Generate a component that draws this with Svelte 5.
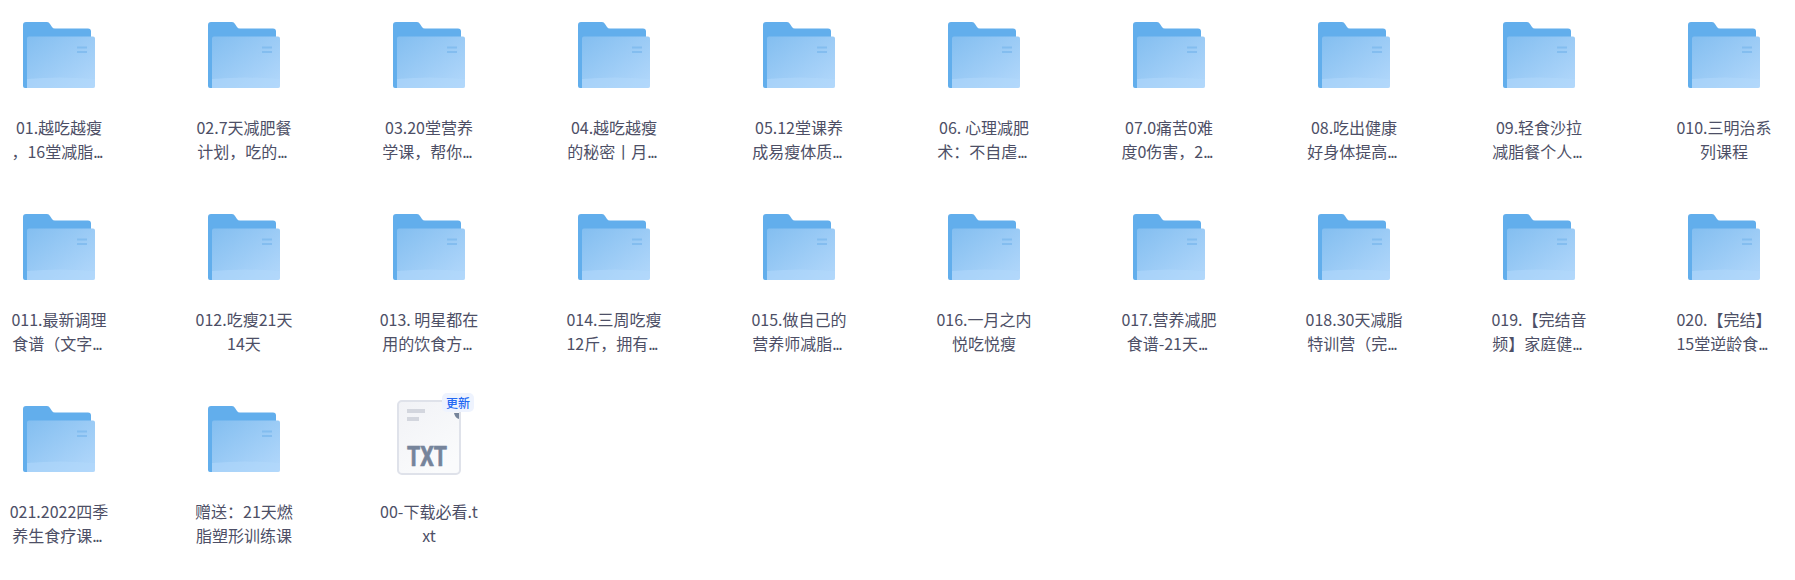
<script>
  const files = [
    ["01.越吃越瘦", "，16堂减脂..."],
    ["02.7天减肥餐", "计划，吃的..."],
    ["03.20堂营养", "学课，帮你..."],
    ["04.越吃越瘦", "的秘密丨月..."],
    ["05.12堂课养", "成易瘦体质..."],
    ["06. 心理减肥", "术：不自虐..."],
    ["07.0痛苦0难", "度0伤害，2..."],
    ["08.吃出健康", "好身体提高..."],
    ["09.轻食沙拉", "减脂餐个人..."],
    ["010.三明治系", "列课程"],
    ["011.最新调理", "食谱（文字..."],
    ["012.吃瘦21天", "14天"],
    ["013. 明星都在", "用的饮食方..."],
    ["014.三周吃瘦", "12斤，拥有..."],
    ["015.做自己的", "营养师减脂..."],
    ["016.一月之内", "悦吃悦瘦"],
    ["017.营养减肥", "食谱-21天..."],
    ["018.30天减脂", "特训营（完..."],
    ["019.【完结音", "频】家庭健..."],
    ["020.【完结】", "15堂逆龄食..."],
    ["021.2022四季", "养生食疗课..."],
    ["赠送：21天燃", "脂塑形训练课"],
    ["00-下载必看.t", "xt", "txt"]
  ];
</script>

<main class="grid">
  {#each files as f, i}
    <div class="item">
      <div class="thumb">
        {#if f[2] === "txt"}
          <svg class="txt-icon" width="66" height="78" viewBox="0 0 66 78">
            <defs>
              <linearGradient id="paper" x1="0" y1="0" x2="0.6" y2="1">
                <stop offset="0" stop-color="#f1f2f6" />
                <stop offset="1" stop-color="#fafbfc" />
              </linearGradient>
            </defs>
            <path d="M6 2H55L64 11V71a4 4 0 0 1-4 4H6a4 4 0 0 1-4-4V6a4 4 0 0 1 4-4Z" fill="url(#paper)" stroke="#dfe2ea" stroke-width="2" />
            <rect x="11" y="10" width="18" height="4" fill="#d3d6de" />
            <rect x="11" y="18" width="12" height="4" fill="#d3d6de" />
            <path d="M58 14h5v6Q59 19 58 14Z" fill="#76849b" />
            <text x="11" y="67" textLength="40" lengthAdjust="spacingAndGlyphs" class="txt-label">TXT</text>
          </svg>
          <span class="badge">更新</span>
        {:else}
          <svg width="72" height="67" viewBox="0 0 72 67">
            <defs>
              <linearGradient id="front{i}" x1="0" y1="0" x2="1" y2="1">
                <stop offset="0" stop-color="#83bef0" />
                <stop offset="1" stop-color="#b3d8fb" />
              </linearGradient>
            </defs>
            <path d="M3 0H24Q26 0 27 2L29 5Q30 6.500 32 6.500H65a3 3 0 0 1 3 3V40H4V66H2a2 2 0 0 1-2-2V3a3 3 0 0 1 3-3Z" fill="#62aeec" />
            <path d="M4 16.500a2 2 0 0 1 2-2H70a2 2 0 0 1 2 2V64a2 2 0 0 1-2 2H4Z" fill="url(#front{i})" />
            <path d="M4 66H70a2 2 0 0 0 2-2V57Q36 54 4 57Z" fill="#b3d8fb" opacity="0.55" />
            <rect x="54" y="24.500" width="10" height="2" fill="#7db9ee" opacity="0.8" />
            <rect x="54" y="29" width="10" height="2" fill="#7db9ee" opacity="0.8" />
          </svg>
        {/if}
      </div>
      <div class="name">
        <div>{f[0]}</div>
        {#if f[1].endsWith("...")}
          <div>{f[1].slice(0, -3)}<span class="dots">...</span></div>
        {:else}
          <div>{f[1]}</div>
        {/if}
      </div>
    </div>
  {/each}
</main>

<style>
  :global(body) {
    margin: 0;
    background: #fff;
  }

  .grid {
    display: grid;
    grid-template-columns: repeat(10, 118px);
    grid-auto-rows: 192px;
    column-gap: 67px;
    padding-top: 22px;
    font-family: "Noto Sans CJK SC", "Liberation Sans", sans-serif;
  }

  .item {
    display: flex;
    flex-direction: column;
    align-items: center;
  }

  .thumb {
    position: relative;
    height: 67px;
    width: 72px;
    display: flex;
    justify-content: center;
    margin-bottom: 26px;
  }

  .thumb svg {
    flex: none;
    display: block;
  }

  .txt-icon {
    margin-top: -7px;
  }

  .txt-label {
    font-family: Roboto, "Liberation Sans", sans-serif;
    font-weight: 700;
    font-size: 28px;
    fill: #76849b;
    stroke: #76849b;
    stroke-width: 0.7px;
  }

  .badge {
    position: absolute;
    left: 49px;
    top: -13px;
    width: 32px;
    height: 19px;
    border-radius: 5px;
    background: #eef3fe;
    color: #2468f2;
    font-size: 12px;
    font-weight: 500;
    line-height: 19px;
    text-align: center;
  }

  .name {
    font-size: 16px;
    line-height: 24px;
    color: #4d4f66;
    text-align: center;
    white-space: nowrap;
  }

  .dots {
    letter-spacing: -1.5px;
    padding-right: 4.500px;
  }
</style>
